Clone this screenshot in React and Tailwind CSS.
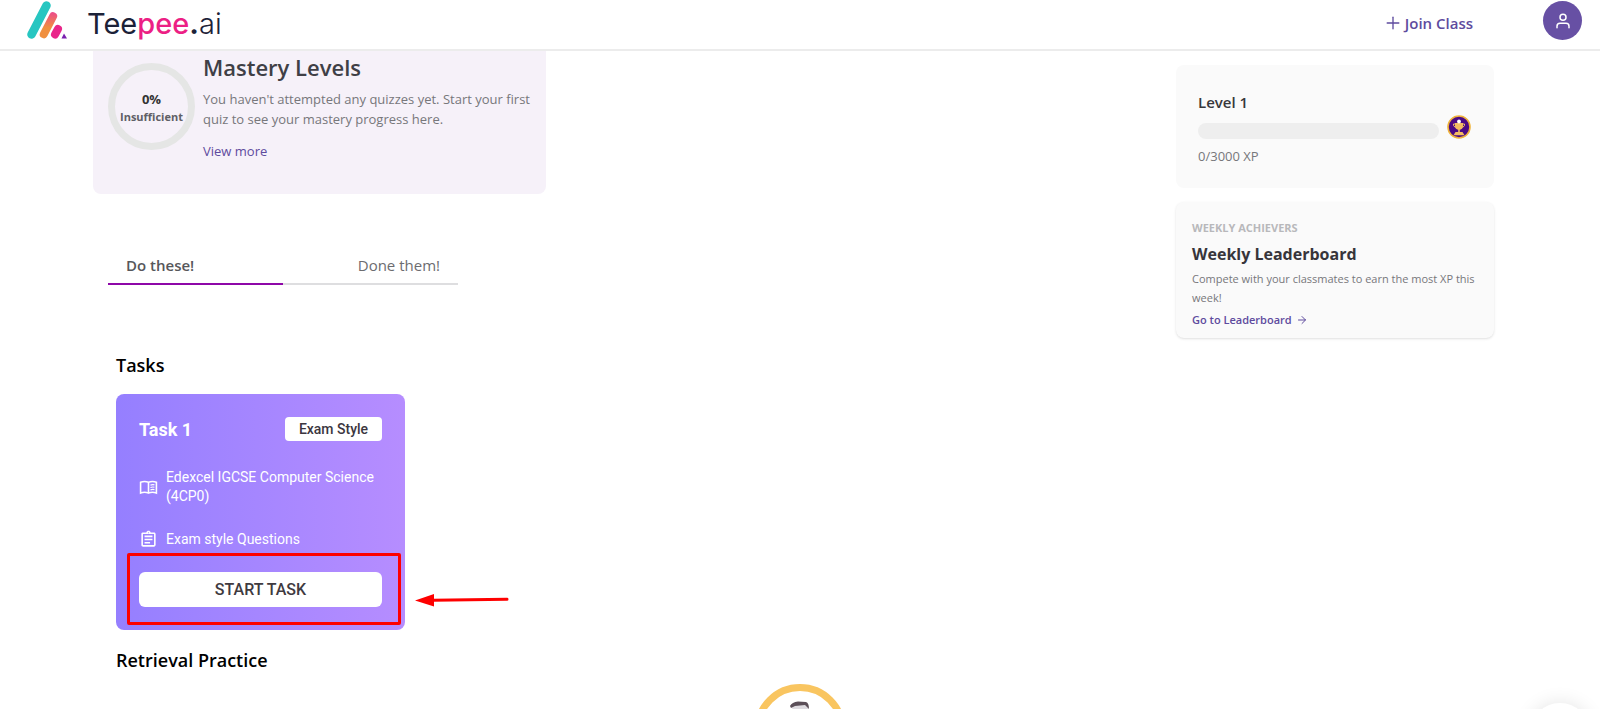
import { useState } from "react";
import { FiUser, FiPlus, FiArrowRight } from "react-icons/fi";
import { MdOutlineAssignment } from "react-icons/md";

function Logo() {
  return (
    <a href="#home" aria-label="Teepee.ai home" className="flex items-start gap-5">
      <svg viewBox="0 0 40 40" className="h-10 w-10" fill="none" strokeLinecap="round">
        <defs>
          <linearGradient id="bar" x1="0" y1="0" x2="0" y2="1">
            <stop offset="0" stopColor="#ec4a8b" />
            <stop offset="0.6" stopColor="#f0903f" />
          </linearGradient>
        </defs>
        <path d="M19.5 5.5 L4.5 34.5" stroke="#27c6c1" strokeWidth="8.5" />
        <path d="M22.5 14.5 a4 4 0 0 1 7.2 3.6 L20.4 36 a4 4 0 0 1 -7.2 -3.6 Z" fill="url(#bar)" />
        <path d="M31 29 L28 34.5" stroke="#e9268a" strokeWidth="8" />
        <path d="M37 33.5 L40 38.5 H34.5 Z" fill="#7a1fb0" />
      </svg>
      <span className="pt-1 font-[Inter,sans-serif] text-[29px] leading-10 text-[#1c2238]">
        Tee<span className="font-medium text-[#ec1f85]">pee</span>
        <b>.</b>
        <span className="font-light">ai</span>
      </span>
    </a>
  );
}

function Header() {
  return (
    <header className="flex h-[51px] items-start justify-between border-b-2 border-[#ececec] bg-white pr-[18px] pl-[27px]">
      <Logo />
      <div className="flex items-start gap-[70px]">
        <button type="button" className="flex h-[46px] items-center gap-0.5 text-[15px] font-semibold text-[#5e4b9e]">
          <FiPlus className="h-5 w-5" strokeWidth={1.6} />
          Join Class
        </button>
        <button
          type="button"
          aria-label="Profile"
          className="mt-px flex h-[39px] w-[39px] items-center justify-center rounded-full bg-[#6750a4] text-white"
        >
          <FiUser className="h-[18px] w-[18px]" />
        </button>
      </div>
    </header>
  );
}

function MasteryCard() {
  return (
    <section className="flex h-[143px] w-[453px] gap-2 rounded-b-lg bg-[#f6f1f9] pl-[15px]">
      <div className="mt-3 flex h-[87px] w-[87px] shrink-0 flex-col items-center justify-center rounded-full border-[7px] border-[#e5e6e5] font-bold">
        <span className="text-[13px] leading-5 text-[#333]">0%</span>
        <span className="text-[11px] leading-4 text-[#5f5f66]">Insufficient</span>
      </div>
      <div>
        <h2 className="text-[22px] leading-8 font-semibold text-[#3f3f46]">Mastery Levels</h2>
        <p className="mt-1.5 text-[13px] leading-5 text-[#77777b]">
          You haven't attempted any quizzes yet. Start your first quiz to see your mastery progress here.
        </p>
        <a href="#mastery" className="mt-3 block text-[13px] leading-5 font-medium text-[#5e4b9e]">
          View more
        </a>
      </div>
    </section>
  );
}

function TaskTabs() {
  const [tab, setTab] = useState("todo");
  const active = "border-[#8e08a8] font-semibold text-[#57575b]";
  const idle = "border-[#dedee0] text-[#6c6c70]";

  return (
    <div role="tablist" className="mt-[57px] ml-[15px] flex w-[350px]">
      <button
        type="button"
        role="tab"
        aria-selected={tab === "todo"}
        onClick={() => setTab("todo")}
        className={`w-1/2 border-b-2 px-[18px] pb-1 text-left text-[15px] leading-7 ${tab === "todo" ? active : idle}`}
      >
        Do these!
      </button>
      <button
        type="button"
        role="tab"
        aria-selected={tab === "done"}
        onClick={() => setTab("done")}
        className={`w-1/2 border-b-2 px-[18px] pb-1 text-right text-[15px] leading-7 ${tab === "done" ? active : idle}`}
      >
        Done them!
      </button>
    </div>
  );
}

function BookIcon() {
  return (
    <svg viewBox="0 0 24 24" className="h-[19px] w-[19px] shrink-0" fill="none" stroke="currentColor" strokeWidth="2">
      <path d="M2 5.5 Q7 3.5 12 5.5 Q17 3.5 22 5.5 V19 Q17 17 12 19 Q7 17 2 19 Z M12 5.5 V20" />
      <path d="M14.5 9 Q17 8 19.5 8.7 M14.5 12 Q17 11 19.5 11.7 M14.5 15 Q17 14 19.5 14.7" strokeWidth="1.4" />
    </svg>
  );
}

function TaskCard() {
  return (
    <article className="relative mt-[15px] w-[289px] rounded-lg bg-linear-to-r from-[#957fff] to-[#b68dff] p-[23px] font-[Roboto,sans-serif] text-white">
      <div className="flex items-end justify-between">
        <h3 className="text-lg leading-[22px] font-bold">Task 1</h3>
        <span className="w-[97px] rounded-sm bg-white text-center text-sm leading-6 font-medium text-[#3b3640]">
          Exam Style
        </span>
      </div>
      <div className="mt-[27px] flex items-center gap-2 text-sm leading-[19px]">
        <BookIcon />
        <p>Edexcel IGCSE Computer Science (4CP0)</p>
      </div>
      <div className="mt-6 flex items-center gap-2 text-sm leading-[19px]">
        <MdOutlineAssignment className="h-[19px] w-[19px] shrink-0" />
        <p>Exam style Questions</p>
      </div>
      <button type="button" className="mt-[23px] h-[35px] w-full rounded-md bg-white text-base font-medium text-[#3f3a40]">
        START TASK
      </button>

      {/* highlight around the start button, with its pointer */}
      <div className="pointer-events-none absolute right-1 bottom-[5px] left-[11px] h-[72px] rounded-xs border-[3px] border-[#fe0000]" />
      <svg viewBox="0 0 94 14" className="pointer-events-none absolute bottom-[23px] left-[299px] h-[14px] w-[94px]">
        <path d="M0 7.5 L19 1 V13.5 Z" fill="#fe0000" />
        <path d="M18 7.2 L92 6.2" stroke="#fe0000" strokeWidth="3" strokeLinecap="round" />
      </svg>
    </article>
  );
}

function Trophy() {
  return (
    <svg viewBox="0 0 24 24" className="h-6 w-6 shrink-0">
      <circle cx="12" cy="12" r="11" fill="#4b0a84" stroke="#f0b43c" strokeWidth="1.6" />
      <path d="M8 8 H16 V11 C16 13.5 14.5 14.7 12 14.7 S8 13.5 8 11 Z" fill="#f3bd62" />
      <path d="M8 9 H6.5 V10.5 L8.3 12.5 M16 9 H17.5 V10.5 L15.7 12.5" stroke="#f3bd62" fill="none" />
      <path d="M11.2 14 H12.8 V17 H11.2 Z M8.5 17 H15.5 L17.5 20.2 H6.5 Z" fill="#f3bd62" />
      <circle cx="12" cy="6.5" r="1.9" fill="#fff" />
    </svg>
  );
}

function LevelCard() {
  return (
    <section className="h-[123px] rounded-lg bg-[#fafafa] pt-[25px] pr-[23px] pl-[22px]">
      <h3 className="text-[15px] leading-6 font-semibold text-[#37373b]">Level 1</h3>
      <div className="mt-px flex items-start gap-2">
        <div
          role="progressbar"
          aria-label="Level progress"
          aria-valuenow={0}
          aria-valuemax={3000}
          className="mt-2 h-4 flex-1 rounded-full bg-[#eeeeee]"
        />
        <Trophy />
      </div>
      <p className="mt-[7px] text-[13px] leading-5 text-[#77777b]">0/3000 XP</p>
    </section>
  );
}

function LeaderboardCard() {
  return (
    <section className="mt-[14px] h-[136px] rounded-lg bg-[#fafafa] px-4 pt-4 shadow-sm">
      <p className="text-[11px] leading-5 font-bold text-[#b8b8bb]">WEEKLY ACHIEVERS</p>
      <h3 className="mt-1 text-base leading-6 font-bold text-[#37353a]">Weekly Leaderboard</h3>
      <p className="mt-[3px] text-[11px] leading-[19px] text-[#77777b]">
        Compete with your classmates to earn the most XP this week!
      </p>
      <a href="#leaderboard" className="mt-1 flex items-center gap-1 text-[11px] leading-[18px] font-semibold text-[#5e4b9e]">
        Go to Leaderboard
        <FiArrowRight className="h-3 w-3" />
      </a>
    </section>
  );
}

export default function App() {
  return (
    <div className="min-h-screen bg-white font-['Open_Sans',sans-serif]">
      <Header />
      <div className="flex items-start justify-between pr-[106px] pl-[93px]">
        <main>
          <MasteryCard />
          <TaskTabs />
          <section className="mt-[66px] ml-[23px]">
            <h2 className="text-lg leading-7 font-semibold text-black">Tasks</h2>
            <TaskCard />
          </section>
          <section className="mt-4 ml-[23px]">
            <h2 className="text-lg leading-7 font-semibold text-black">Retrieval Practice</h2>
          </section>
        </main>
        <aside className="w-[318px] pt-[14px]">
          <LevelCard />
          <LeaderboardCard />
        </aside>
      </div>

      {/* floating mascot and chat bubble, both peeking in from the bottom edge */}
      <div className="fixed -bottom-[67px] left-1/2 h-[92px] w-[92px] -translate-x-1/2 overflow-hidden rounded-full border-[7px] border-[#f9c560] bg-white">
        <svg viewBox="0 0 78 78" className="h-full w-full">
          <path d="M31 15 Q32 12 37 11 L46 12 Q48 14 47 22 L32 24 Z" fill="#dedbe0" />
          <path d="M29 15 Q31 11 37 10.5 L45 11 Q48 12 48 18 L44 14 L34 15 L30 17 Z" fill="#5b4f58" />
        </svg>
      </div>
      <button
        type="button"
        aria-label="Open chat"
        className="fixed right-[10px] -bottom-[54px] h-[60px] w-[60px] rounded-full bg-white shadow-[0_1px_20px_rgba(0,0,0,0.12)]"
      />
    </div>
  );
}
